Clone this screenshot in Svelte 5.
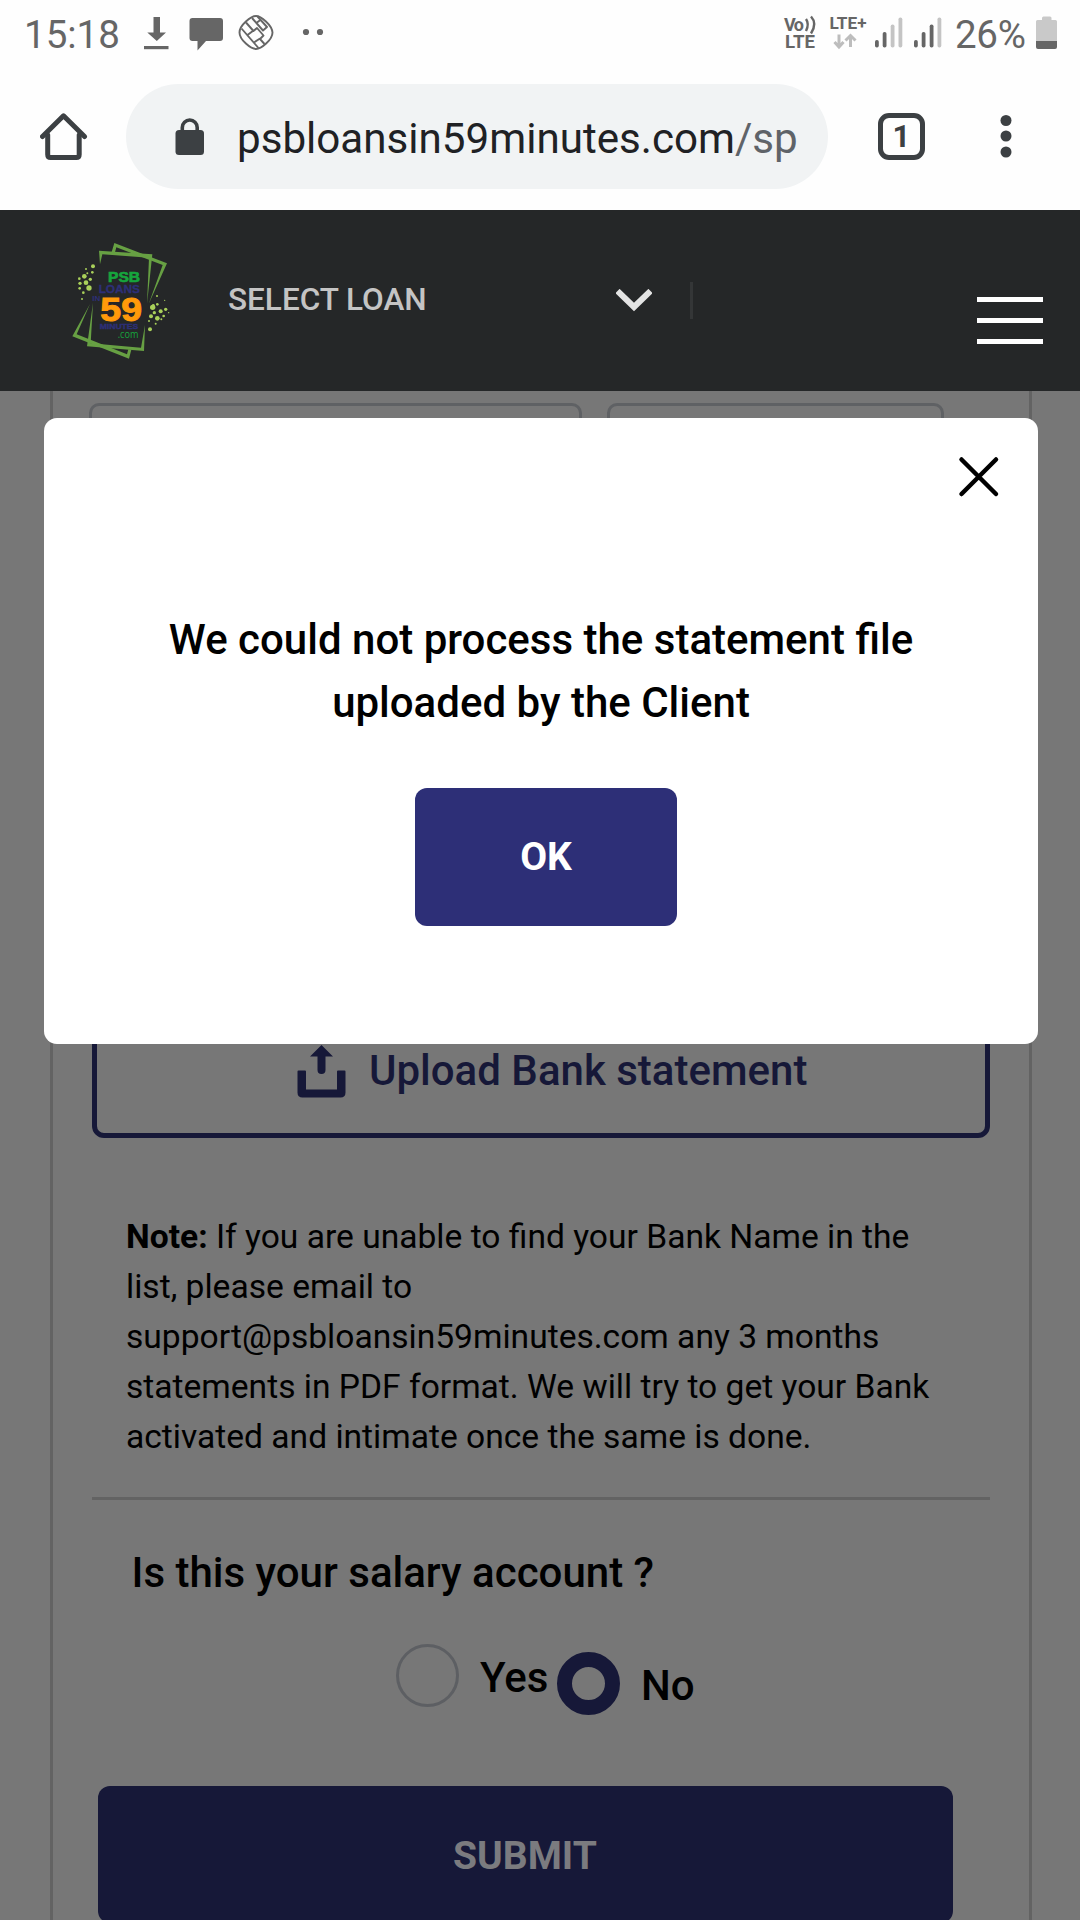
<script>
  let account = $state('no');
  const noteLines = [
    ' If you are unable to find your Bank Name in the',
    'list, please email to',
    'support@psbloansin59minutes.com any 3 months',
    'statements in PDF format. We will try to get your Bank',
    'activated and intimate once the same is done.'
  ];
  const leftDots = [
    [129, 109, 6], [108, 117, 3], [127, 127, 4], [103, 139, 7], [88, 146, 4], [121, 148, 5],
    [90, 160, 5], [108, 158, 7], [89, 175, 4], [117, 174, 8], [100, 188, 4], [96, 207, 3], [112, 130, 3]
  ];
  const rightDots = [
    [321, 198, 3], [344, 211, 2], [322, 223, 4], [308, 232, 8], [347, 238, 5], [332, 244, 6],
    [356, 248, 2], [313, 248, 5], [303, 259, 6], [322, 265, 7], [341, 258, 4], [334, 268, 3],
    [297, 273, 3], [317, 281, 3], [300, 298, 6], [310, 226, 4]
  ];
</script>

<div class="screen">
  <header class="status">
    <span class="clock">15:18</span>
    <svg class="s-left" width="200" height="60" viewBox="130 0 200 60">
      <g fill="#666">
        <path d="M153.500 17h6.500v15.500h6L156.800 41l-9.500-8.500h6.200z" />
        <path d="M144 46h24.500v3.200H144z" />
        <path d="M192.500 18h27.500q3 0 3 3v17q0 3-3 3h-14l-8.500 9.500V41h-5q-3 0-3-3V21q0-3 3-3z" />
        <circle cx="306" cy="32" r="3.100" /><circle cx="320" cy="32" r="3.100" />
      </g>
      <g fill="none" stroke="#666" stroke-width="1.900" stroke-linejoin="round">
        <path d="M256 16c5 0 16 9 16.500 16.500C272.500 40 261 49 256 49s-16.500-9-16.500-16.500C239.500 25 251 16 256 16z" />
        <path d="M241.500 28.500L258.500 48M246 22.500l7.500 8.500 3.500-3 6.500 7.500-3.500 3.500 4.500 5M252 18l11 12.500 4-3.500-9.500-10.500M257 22.500l4-3M247.500 35l6-4.500M254 42.500l6-4" />
      </g>
    </svg>
    <svg class="s-right" width="172" height="60" viewBox="780 0 172 60">
      <g class="net" fill="#666">
        <text x="784" y="30.500" font-size="18" textLength="20">Vo</text>
        <text x="785" y="47.800" font-size="18" textLength="30" lengthAdjust="spacingAndGlyphs">LTE</text>
        <text x="829.500" y="29" font-size="17" textLength="37" lengthAdjust="spacingAndGlyphs">LTE+</text>
      </g>
      <path d="M806 19q3.500 5 0 12M811 16.500q6.500 7 0 17" fill="none" stroke="#666" stroke-width="2.400" />
      <path d="M839 34.500V47M834.500 42l4.500 5 4.500-5M850.500 47V36M845.500 40.500l5-5 5 5" fill="none" stroke="#bdbdbd" stroke-width="3" />
      <g fill="#666">
        <rect x="875" y="40" width="3.800" height="7.500" rx="1.800" />
        <rect x="882.700" y="32" width="3.800" height="15.500" rx="1.800" />
        <rect x="914" y="40" width="3.800" height="7.500" rx="1.800" />
        <rect x="921.700" y="32" width="3.800" height="15.500" rx="1.800" />
        <rect x="929.700" y="24.500" width="3.800" height="23" rx="1.800" />
      </g>
      <g fill="#c4c4c4">
        <rect x="890.700" y="24.500" width="3.800" height="23" rx="1.800" />
        <rect x="898.500" y="17.500" width="3.800" height="30" rx="1.800" />
        <rect x="937.500" y="17.500" width="3.800" height="30" rx="1.800" />
      </g>
    </svg>
    <span class="pct">26%</span>
    <svg class="batt" width="22" height="60" viewBox="1036 0 22 60">
      <path d="M1042 20v-2q0-1.500 1.500-1.500h6.500q1.500 0 1.500 1.500v2h4q1.500 0 1.500 1.500V41h-21V21.500q0-1.500 1.500-1.500z" fill="#c9c9c9" />
      <path d="M1036 41h21v6q0 2-2 2h-17q-2 0-2-2z" fill="#666" />
    </svg>
  </header>

  <nav class="browser">
    <svg class="home" width="48" height="48" viewBox="0 0 48 48" fill="none" stroke="#3c4043" stroke-width="5" stroke-linejoin="round" stroke-linecap="round">
      <path d="M7.700 22v19.500q0 3 3 3h25.500q3 0 3-3V22" />
      <path d="M2.500 23.500L23.500 2.800l21 20.700" />
    </svg>
    <div class="url">
      <svg width="30" height="38" viewBox="0 0 30 38">
        <rect x="0.500" y="12" width="28.500" height="25" rx="3.500" fill="#3c4043" />
        <path d="M7.300 14V9.500a7.400 7.400 0 0 1 14.900 0V14" fill="none" stroke="#3c4043" stroke-width="3.600" />
      </svg>
      <span class="address">psbloansin59minutes.com<i>/sp</i></span>
    </div>
    <div class="tabs">1</div>
    <svg class="more" width="12" height="44" viewBox="0 0 12 44" fill="#3c4043">
      <circle cx="6" cy="6.500" r="5.500" /><circle cx="6" cy="22" r="5.500" /><circle cx="6" cy="38" r="5.500" />
    </svg>
  </nav>

  <div class="sitebar">
    <svg class="logo" width="140" height="140" viewBox="0 0 420 420">
      <g fill="#67a043">
        <path d="M147 62L307 73 291 222 297 83 157 73 150 103z" />
        <path d="M185 66L193 39 351 100 296 222 338 105 199 52 195 67z" />
        <path d="M129 218L111 349 282 363 285 285 273 353 122 340z" />
        <path d="M120 222L67 319 237 386 244 359 235 358 231 373 80 313z" />
      </g>
      <g fill="#a9d05a">
        {#each [...leftDots, ...rightDots] as [cx, cy, r]}
          <circle {cx} {cy} {r} />
        {/each}
      </g>
      <g class="mark">
        <text x="174" y="156" font-size="43" textLength="96" lengthAdjust="spacingAndGlyphs" fill="#16a53d" stroke="#16a53d" stroke-width="2">PSB</text>
        <text x="146" y="188" font-size="33" textLength="124" lengthAdjust="spacingAndGlyphs" fill="#2d2f77" stroke="#2d2f77">LOANS</text>
        <text x="127" y="213" font-size="20" textLength="24" lengthAdjust="spacingAndGlyphs" fill="#2d2f77">IN</text>
        <text x="151" y="274" font-size="100" textLength="125" lengthAdjust="spacingAndGlyphs" fill="#ff9a0a" stroke="#ff9a0a" stroke-width="3">59</text>
        <text x="149" y="297" font-size="20" textLength="116" lengthAdjust="spacingAndGlyphs" fill="#2d2f77" stroke="#2d2f77">MINUTES</text>
        <text class="com" x="203" y="323" font-size="30" textLength="62" lengthAdjust="spacingAndGlyphs" fill="#16a53d">.com</text>
      </g>
    </svg>
    <span class="select">SELECT LOAN</span>
    <svg class="chev" width="36" height="26" viewBox="0 0 36 26">
      <path d="M1.500 2L18 18 34.500 2" fill="none" stroke="#e4e4e4" stroke-width="6" />
    </svg>
    <span class="rule"></span>
    <div class="burger"><span></span><span></span><span></span></div>
  </div>

  <main class="page">
    <div class="card">
      <div class="fields"><div class="field wide"></div><div class="field"></div></div>
      <div class="upload">
        <svg width="49" height="53" viewBox="0 0 49 53" fill="#161838">
          <path d="M24.500 0L36 11.500h-7.500V25a4 4 0 0 1-8 0V11.500H13z" />
          <path d="M.500 26.500q0-1 1-1h6.500q1 0 1 1V44.500h31V26.500q0-1 1-1h6.500q1 0 1 1V47.500q0 5-5 5H5.500q-5 0-5-5z" />
        </svg>
        <span>Upload Bank statement</span>
      </div>
      <p class="note">
        {#each noteLines as line, i}
          <span class="line">{#if i === 0}<b>Note:</b>{/if}{line}</span>
        {/each}
      </p>
      <div class="hr"></div>
      <h2>Is this your salary account ?</h2>
      <div class="radios">
        <button class="radio yes" class:on={account === 'yes'} onclick={() => (account = 'yes')}><i></i><span>Yes</span></button>
        <button class="radio no" class:on={account === 'no'} onclick={() => (account = 'no')}><i></i><span>No</span></button>
      </div>
      <button class="submit">SUBMIT</button>
    </div>
  </main>

  <div class="modal">
    <svg class="close" width="42" height="42" viewBox="0 0 42 42">
      <path d="M3.500 3.500l34.500 34.500M38 3.500l-34.500 34.500" stroke="#000" stroke-width="4.500" stroke-linecap="round" />
    </svg>
    <p>We could not process the statement file<br />uploaded by the Client</p>
    <button class="ok">OK</button>
  </div>
</div>

<style>
  :global(body) { margin: 0; background: #777; }
  .screen { position: relative; width: 1080px; height: 1920px; overflow: hidden; background: #777; font-family: Roboto, "Liberation Sans", sans-serif; color: #000; }
  .screen * { box-sizing: border-box; }
  svg { display: block; flex: none; }
  button { font-family: inherit; border: 0; padding: 0; margin: 0; color: inherit; background: none; }
  .status { display: flex; height: 66px; background: #fefefe; color: #666; font-size: 38.500px; line-height: 70px; white-space: nowrap; }
  .clock { width: 106px; margin-left: 24px; }
  .s-right { margin-left: 450px; }
  .pct { width: 81px; margin-left: 3px; font-size: 38.500px; letter-spacing: -0.300px; }
  .net { font-family: Roboto, sans-serif; font-weight: 700; }
  .mark { font-family: "Liberation Sans", Arial, sans-serif; font-weight: 700; }
  .com { font-family: "Open Sans", sans-serif; font-weight: 400; }
  .browser { display: flex; align-items: center; height: 144px; padding: 0 0 2px 40px; background: #fefefe; }
  .url { display: flex; align-items: center; width: 702px; height: 105px; margin-left: 38px; margin-top: -1px; padding-left: 49px; border-radius: 53px; background: #f1f3f4; }
  .home { margin-top: -1px; }
  .address { margin-left: 32px; font-size: 42.150px; line-height: 60px; padding-top: 5px; white-space: nowrap; color: #202124; }
  .address i { font-style: normal; color: #5f6368; }
  .tabs { width: 47px; height: 47px; margin: -1px 0 0 50px; border: 5px solid #3c4043; border-radius: 11px; font-size: 31px; font-weight: 700; line-height: 37px; text-align: center; color: #3c4043; }
  .more { margin: -2px 0 0 75px; }
  .sitebar { display: flex; height: 181px; background: #252728; }
  .logo { margin: 20px 0 0 50px; }
  .select { width: 378px; margin: 65px 0 0 38px; color: #c4c4c4; font-size: 31.500px; font-weight: 500; line-height: 50px; white-space: nowrap; }
  .chev { margin-top: 79px; margin-left: 10px; }
  .rule { width: 3px; height: 37px; margin: 72px 0 0 38px; background: #343637; }
  .burger { display: flex; flex-direction: column; gap: 16px; width: 66px; margin: 87px 0 0 284px; }
  .burger span { height: 5px; background: #fff; }
  .page { padding: 0 48px 0 50px; }
  .card { height: 1529px; padding-left: 39px; border: solid #636363; border-width: 0 3px; }
  .fields { display: flex; gap: 25px; padding-top: 12px; margin-left: -3px; }
  .field { width: 337px; height: 100px; border: 3px solid #5f6164; border-radius: 10px; }
  .wide { width: 493px; }
  .upload { display: flex; width: 898px; height: 148px; margin-top: 487px; padding: 51px 0 0 200px; border: 5px solid #161838; border-radius: 12px; color: #161838; font-size: 42px; font-weight: 500; line-height: 60px; white-space: nowrap; }
  .upload svg { margin-top: -1px; }
  .upload span { margin: -5px 0 0 23px; }
  .note { margin: 74px 0 0 34px; font-size: 33.600px; line-height: 50px; }
  .line { display: block; white-space: pre; }
  .hr { width: 898px; height: 3px; margin-top: 35px; background: #636363; }
  h2 { margin: 43px 0 0 39.500px; font-size: 42px; font-weight: 500; line-height: 60px; white-space: nowrap; }
  .radios { display: flex; margin: 41px 0 0 304px; height: 72px; }
  .radio { display: flex; align-items: center; height: 63px; font-size: 42px; font-weight: 500; line-height: 63px; }
  .radio i { width: 63px; height: 63px; margin-right: 21px; border: 3px solid #5d5f63; border-radius: 50%; }
  .radio span { padding-top: 3px; }
  .radio.on i { border: 15.500px solid #161838; }
  .yes { width: 161px; }
  .no { margin-top: 8px; }
  .submit { display: block; width: 855px; height: 137px; margin: 70px 0 0 6px; padding: 2px 1px 0 0; border-radius: 12px; background: #161838; color: #7b7b7f; font-size: 39px; font-weight: 700; }
  .modal { position: absolute; left: 44px; top: 418px; width: 994px; height: 626px; border-radius: 13px; background: #fff; }
  .close { margin: 38px 0 0 914px; }
  .modal p { margin: 110px 0 0; text-align: center; font-size: 42px; font-weight: 500; line-height: 63px; }
  .ok { display: block; width: 262px; height: 138px; margin: 54px 0 0 371px; border-radius: 12px; background: #2d2f77; color: #fff; font-size: 39px; font-weight: 700; }
</style>
